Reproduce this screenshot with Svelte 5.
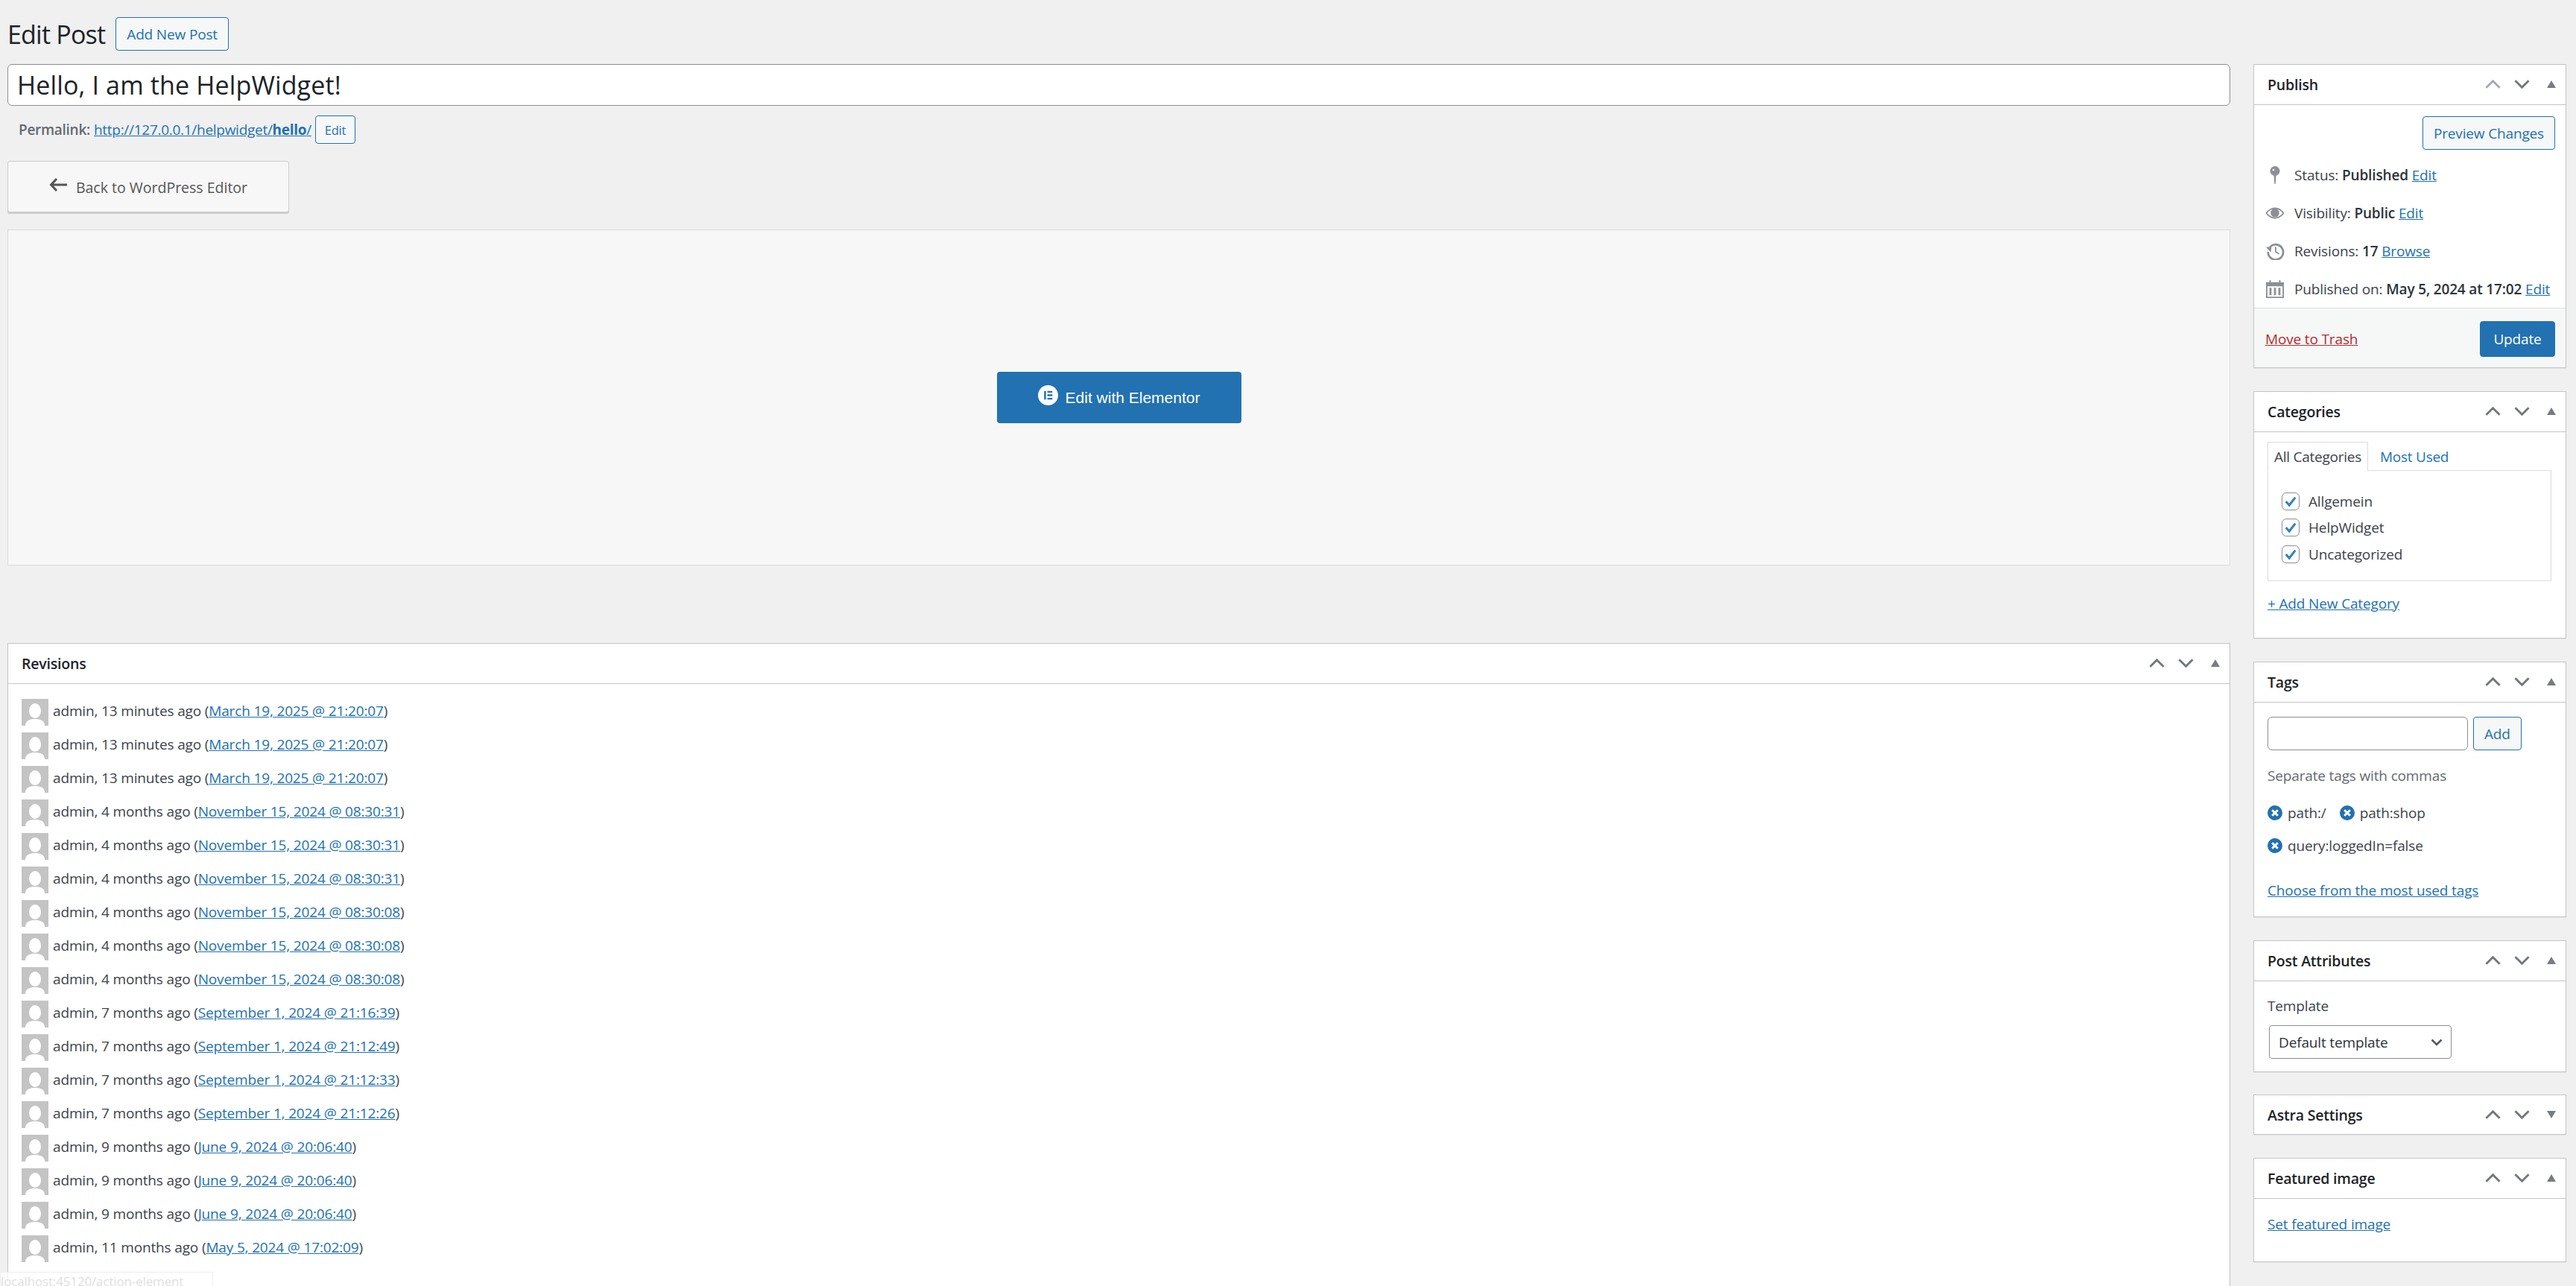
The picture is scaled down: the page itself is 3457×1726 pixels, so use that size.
<script>
  const sideRevs = [
    ["13 minutes", "March 19, 2025 @ 21:20:07", 3],
    ["4 months", "November 15, 2024 @ 08:30:31", 3],
    ["4 months", "November 15, 2024 @ 08:30:08", 3],
    ["7 months", "September 1, 2024 @ 21:16:39", 1],
    ["7 months", "September 1, 2024 @ 21:12:49", 1],
    ["7 months", "September 1, 2024 @ 21:12:33", 1],
    ["7 months", "September 1, 2024 @ 21:12:26", 1],
    ["9 months", "June 9, 2024 @ 20:06:40", 3],
    ["11 months", "May 5, 2024 @ 17:02:09", 1],
  ]
  const revisions = sideRevs.flatMap(([ago, date, n]) => Array(n).fill({ ago, date }))
  const categories = ["Allgemein", "HelpWidget", "Uncategorized"]
</script>

{#snippet handles(collapsed = false, upFaded = false)}
  <div class="handles">
    <svg class="chev" class:faded={upFaded} viewBox="0 0 22 14"><path d="M1.5 12 11 2.5 20.5 12" /></svg>
    <svg class="chev" viewBox="0 0 22 14"><path d="M1.5 2 11 11.5 20.5 2" /></svg>
    {#if collapsed}
      <svg class="tri" viewBox="0 0 12 10"><path d="M0 0h12L6 10z" /></svg>
    {:else}
      <svg class="tri" viewBox="0 0 12 10"><path d="M6 0l6 10H0z" /></svg>
    {/if}
  </div>
{/snippet}

{#snippet tagRemove()}
  <svg class="tag-x" viewBox="0 0 20 20">
    <circle cx="10" cy="10" r="10" fill="#2271b1" />
    <path d="M6.2 6.2l7.6 7.6M13.8 6.2l-7.6 7.6" stroke="#fff" stroke-width="3" />
  </svg>
{/snippet}

<div class="page">
  <main class="main">
    <div class="heading">
      <h1>Edit Post</h1>
      <a class="btn" href="#new">Add New Post</a>
    </div>
    <div class="title-input">Hello, I am the HelpWidget!</div>
    <div class="permalink">
      <strong>Permalink:</strong>
      <a href="#p">http://127.0.0.1/helpwidget/<b>hello</b>/</a>
      <span class="btn small">Edit</span>
    </div>
    <button class="back">
      <svg viewBox="0 0 24 20"><path d="M10 2 2.5 10 10 18M3 10h21" /></svg>
      Back to WordPress Editor
    </button>
    <div class="elementor">
      <div class="el-btn">
        <svg viewBox="0 0 28 28">
          <circle cx="14" cy="14" r="14" fill="#fff" />
          <path d="M8.5 8h2.6v12H8.5zM13 8h7v2.4h-7zM13 12.8h7v2.4h-7zM13 17.6h7V20h-7z" fill="#2271b1" />
        </svg>
        Edit with Elementor
      </div>
    </div>
    <section class="box revisions">
      <header><h2>Revisions</h2>{@render handles()}</header>
      <ul>
        {#each revisions as r}
          <li>
            <svg class="avatar" viewBox="0 0 36 36">
              <rect width="36" height="36" fill="#c4c4c4" />
              <ellipse cx="18" cy="16" rx="8" ry="10" fill="#fff" />
              <path d="M5 36c0-7 6-9 13-9s13 2 13 9z" fill="#fff" />
            </svg>
            <span>admin, {r.ago} ago (<a href="#r">{r.date}</a>)</span>
          </li>
        {/each}
      </ul>
    </section>
  </main>

  <aside class="side">
    <section class="box">
      <header><h2>Publish</h2>{@render handles(false, true)}</header>
      <div class="pub-top">
        <span class="btn">Preview Changes</span>
      </div>
      <div class="pub-row">
        <svg viewBox="0 0 26 24" class="ico"><circle cx="13" cy="6.500" r="6.500" /><path d="M11.500 12h3l-.7 11.500-1.500.5z" /><circle cx="11" cy="5" r="1.300" fill="#fff" /></svg>
        <span>Status: <b>Published</b> <a href="#e">Edit</a></span>
      </div>
      <div class="pub-row">
        <svg viewBox="0 0 28 20" class="ico"><path fill-rule="evenodd" d="M14 2C8 2 3 6 .5 10 3 14 8 18 14 18s11-4 13.500-8C25 6 20 2 14 2zm0 2c5 0 9 3 11.200 6-2.200 3-6.200 6-11.200 6S5 13 2.800 10C5 7 9 4 14 4z" /><circle cx="14" cy="9.500" r="6.300" /></svg>
        <span>Visibility: <b>Public</b> <a href="#e">Edit</a></span>
      </div>
      <div class="pub-row">
        <svg viewBox="0 0 26 26" class="ico"><path class="line" d="M5.500 7.500A11 11 0 1 1 3 14" /><path d="M0 7l8 0-1 8z" /><path class="line thin" d="M14 7v7l5 3" /></svg>
        <span>Revisions: <b>17</b> <a href="#b">Browse</a></span>
      </div>
      <div class="pub-row">
        <svg viewBox="0 0 26 26" class="ico"><path fill-rule="evenodd" d="M0 3h5V0h2v3h12V0h2v3h5v23H0zM2 9v15h22V9z" /><path d="M5 11h3v11H5zM11.500 11h3v11h-3zM18 11h3v11h-3z" /></svg>
        <span>Published on: <b>May 5, 2024 at 17:02</b> <a href="#e">Edit</a></span>
      </div>
      <footer class="pub-foot">
        <a class="trash" href="#t">Move to Trash</a>
        <span class="btn primary">Update</span>
      </footer>
    </section>

    <section class="box">
      <header><h2>Categories</h2>{@render handles()}</header>
      <div class="inside cats">
        <div class="tabs">
          <span class="tab active">All Categories</span>
          <span class="tab">Most Used</span>
        </div>
        <div class="cat-list">
          {#each categories as c}
            <label class="cat">
              <span class="check">
                <svg viewBox="0 0 20 20"><path d="M3 10l5 5.500L17 4" /></svg>
              </span>
              {c}
            </label>
          {/each}
        </div>
        <a class="add-cat" href="#c">+ Add New Category</a>
      </div>
    </section>

    <section class="box">
      <header><h2>Tags</h2>{@render handles()}</header>
      <div class="inside tags">
        <div class="tag-add">
          <div class="field"></div>
          <span class="btn">Add</span>
        </div>
        <p class="howto">Separate tags with commas</p>
        <div class="tag-list">
          <div class="tag-line">
            <span class="tag">{@render tagRemove()}path:/</span>
            <span class="tag">{@render tagRemove()}path:shop</span>
          </div>
          <div class="tag-line">
            <span class="tag">{@render tagRemove()}query:loggedIn=false</span>
          </div>
        </div>
        <a class="choose" href="#m">Choose from the most used tags</a>
      </div>
    </section>

    <section class="box">
      <header><h2>Post Attributes</h2>{@render handles()}</header>
      <div class="inside attrs">
        <p class="label">Template</p>
        <div class="select">
          Default template
          <svg viewBox="0 0 16 10"><path d="M1.500 1.500 8 8l6.500-6.500" /></svg>
        </div>
      </div>
    </section>

    <section class="box collapsed">
      <header><h2>Astra Settings</h2>{@render handles(true)}</header>
    </section>

    <section class="box">
      <header><h2>Featured image</h2>{@render handles()}</header>
      <div class="inside featured"><a href="#f">Set featured image</a></div>
    </section>
  </aside>
</div>
<div class="status-hint">localhost:45120/action-element</div>

<style>
  :global(body) {
    margin: 0;
    height: 1726px;
    overflow: hidden;
    background: #f0f0f1;
    font-family: "Open Sans", "Noto Sans", sans-serif;
    font-size: 19px;
    letter-spacing: -0.150px;
    color: #3c434a;
  }
  a {
    color: #2271b1;
  }
  .page {
    display: flex;
    gap: 31px;
    padding: 0 13px 0 10px;
    height: 1726px;
    overflow: hidden;
  }
  .main {
    width: 2983px;
    flex: none;
  }
  .side {
    width: 420px;
    flex: none;
    padding-top: 86px;
    display: flex;
    flex-direction: column;
    gap: 30.500px;
  }
  .heading {
    display: flex;
    align-items: center;
    gap: 14px;
    padding-top: 23px;
    height: 45px;
  }
  h1 {
    margin: 0;
    font-size: 34px;
    font-weight: 400;
    color: #1d2327;
    letter-spacing: -0.800px;
  }
  .btn {
    display: inline-flex;
    align-items: center;
    justify-content: center;
    box-sizing: border-box;
    height: 45px;
    padding: 0 14px;
    border: 1.500px solid #2271b1;
    border-radius: 4px;
    background: #f6f7f7;
    color: #2271b1;
    text-decoration: none;
    white-space: nowrap;
  }
  .btn.small {
    height: 38px;
    width: 54px;
    padding: 0;
    font-size: 16.500px;
  }
  .btn.primary {
    height: 48px;
    width: 101px;
    padding: 0;
    background: #2271b1;
    color: #fff;
  }
  .title-input {
    box-sizing: border-box;
    margin-top: 18px;
    height: 56px;
    padding-left: 12px;
    display: flex;
    align-items: center;
    background: #fff;
    border: 1.500px solid #8c8f94;
    border-radius: 6px;
    font-size: 34px;
    letter-spacing: 0.150px;
    color: #1d2327;
  }
  .permalink {
    display: flex;
    align-items: center;
    gap: 5px;
    margin-top: 13px;
    padding-left: 15px;
    height: 38px;
    color: #646970;
    letter-spacing: -0.280px;
  }
  .permalink strong {
    font-weight: 600;
  }
  .back {
    display: flex;
    align-items: center;
    justify-content: center;
    gap: 12px;
    box-sizing: border-box;
    margin-top: 23px;
    padding-top: 2px;
    width: 378px;
    height: 69px;
    background: #f7f7f7;
    border: 1px solid #ccc;
    border-radius: 3px;
    box-shadow: 0 2px 0 #ccc;
    font: inherit;
    font-size: 19.500px;
    letter-spacing: 0;
    color: #555;
  }
  .back svg {
    width: 24px;
    height: 20px;
    fill: none;
    stroke: #555;
    stroke-width: 3;
    margin-top: -6px;
  }
  .elementor {
    box-sizing: border-box;
    margin-top: 23px;
    height: 451px;
    display: flex;
    align-items: center;
    justify-content: center;
    background: #f7f7f7;
    border: 1.500px solid #dcdcde;
  }
  .el-btn {
    display: flex;
    align-items: center;
    justify-content: center;
    gap: 10px;
    width: 328px;
    height: 69px;
    background: #2271b1;
    border-radius: 4px;
    color: #fff;
    font-family: "Liberation Sans", Arial, sans-serif;
    font-size: 21px;
    letter-spacing: 0;
  }
  .el-btn svg {
    width: 27px;
    height: 27px;
    margin-top: -6px;
  }
  .box {
    box-sizing: border-box;
    background: #fff;
    border: 1.500px solid #c3c4c7;
    box-shadow: 0 1px 1px rgba(0, 0, 0, 0.04);
  }
  .box header {
    box-sizing: border-box;
    height: 54px;
    display: flex;
    align-items: center;
    justify-content: space-between;
    padding-left: 18px;
    border-bottom: 1.500px solid #c3c4c7;
  }
  .box.collapsed header {
    height: 52px;
    border-bottom: none;
  }
  h2 {
    margin: 0;
    font-size: 19.500px;
    font-weight: 600;
    color: #1d2327;
    letter-spacing: -0.200px;
  }
  .handles {
    display: flex;
    align-items: center;
    margin-right: 13px;
    gap: 18px;
    margin-top: -1px;
  }
  .chev {
    width: 21px;
    height: 14px;
    fill: none;
    stroke: #72777c;
    stroke-width: 3;
  }
  .chev.faded {
    stroke: #a7aaad;
  }
  .tri {
    width: 12px;
    height: 10px;
    fill: #787c82;
    margin-left: 5px;
  }
  .revisions {
    margin-top: 104px;
  }
  .revisions ul {
    list-style: none;
    margin: 0;
    padding: 19.500px 0 100px 18px;
  }
  .revisions li {
    display: flex;
    align-items: flex-start;
    gap: 6px;
    height: 45px;
  }
  .revisions li span {
    line-height: 33px;
  }
  .avatar {
    width: 36px;
    height: 36px;
    flex: none;
  }
  .pub-top {
    display: flex;
    justify-content: flex-end;
    padding: 15px 14px 0 0;
    margin-bottom: 8px;
  }
  .pub-row {
    display: flex;
    align-items: center;
    gap: 13px;
    height: 51px;
    padding-left: 15px;
  }
  .pub-row span {
    white-space: nowrap;
  }
  .pub-row b {
    font-weight: 600;
    color: #2c3338;
  }
  .ico {
    width: 26px;
    height: 24px;
    fill: #8c8f94;
    flex: none;
  }
  .ico .line {
    fill: none;
    stroke: #8c8f94;
    stroke-width: 3;
  }
  .ico .line.thin {
    stroke-width: 2;
  }
  .pub-foot {
    box-sizing: border-box;
    display: flex;
    align-items: center;
    justify-content: space-between;
    height: 80px;
    padding: 2px 14px 0 15px;
    background: #f6f7f7;
    border-top: 1.500px solid #dcdcde;
  }
  .trash {
    color: #b32d2e;
  }
  .inside {
    padding: 0 18px;
  }
  .cats {
    padding-top: 13px;
    padding-bottom: 33px;
  }
  .tabs {
    display: flex;
    height: 40px;
    margin-bottom: -1.500px;
    position: relative;
  }
  .tab {
    box-sizing: border-box;
    display: flex;
    align-items: center;
    padding: 0 8px;
    color: #2271b1;
    border: 1.500px solid transparent;
    margin-right: 7px;
    white-space: nowrap;
    letter-spacing: -0.250px;
  }
  .tab.active {
    color: #3c434a;
    background: #fff;
    border-color: #dcdcde;
    border-bottom-color: #fff;
    width: 135px;
  }
  .cat-list {
    box-sizing: border-box;
    height: 149px;
    width: 381px;
    padding: 28.500px 18px 0;
    border: 1.500px solid #dcdcde;
    display: flex;
    flex-direction: column;
    gap: 11.500px;
  }
  .cat {
    display: flex;
    align-items: center;
    gap: 12px;
    height: 24px;
  }
  .check {
    box-sizing: border-box;
    width: 24px;
    height: 24px;
    border: 1.500px solid #8c8f94;
    border-radius: 6px;
    display: flex;
    align-items: center;
    justify-content: center;
  }
  .check svg {
    width: 18px;
    height: 18px;
    fill: none;
    stroke: #3582c4;
    stroke-width: 3.500;
  }
  .add-cat {
    display: block;
    margin-top: 17px;
    font-weight: 500;
  }
  .tags {
    padding-top: 19.500px;
    padding-bottom: 22px;
  }
  .tag-add {
    display: flex;
    gap: 7px;
  }
  .field {
    box-sizing: border-box;
    width: 269px;
    height: 45px;
    background: #fff;
    border: 1.500px solid #8c8f94;
    border-radius: 6px;
  }
  .howto {
    margin: 21px 0 0;
    color: #646970;
  }
  .tag-list {
    margin-top: 25px;
    display: flex;
    flex-direction: column;
    gap: 20px;
  }
  .tag-line {
    display: flex;
    gap: 18px;
    height: 24px;
    align-items: center;
  }
  .tag {
    display: flex;
    align-items: center;
    gap: 7px;
  }
  .tag-x {
    width: 20px;
    height: 20px;
    flex: none;
  }
  .choose {
    display: block;
    margin-top: 35px;
  }
  .attrs {
    padding-top: 20.500px;
    padding-bottom: 16.500px;
  }
  .label {
    margin: 0;
    font-weight: 500;
    color: #3c434a;
  }
  .select {
    box-sizing: border-box;
    display: flex;
    align-items: center;
    justify-content: space-between;
    margin: 13px 0 0 2px;
    width: 245px;
    height: 45px;
    padding: 0 11px 0 12px;
    background: #fff;
    border: 1.500px solid #8c8f94;
    border-radius: 4px;
    color: #2c3338;
  }
  .select svg {
    width: 16px;
    height: 10px;
    fill: none;
    stroke: #50575e;
    stroke-width: 2.500;
  }
  .featured {
    box-sizing: border-box;
    padding-top: 21px;
    height: 84px;
  }
  .status-hint {
    position: fixed;
    left: 0;
    top: 1707px;
    width: 286px;
    height: 30px;
    box-sizing: border-box;
    background: rgba(255, 255, 255, 0.8);
    border: 1px solid #eee;
    color: #ddd;
    font-size: 17px;
    white-space: nowrap;
    overflow: hidden;
  }
</style>
